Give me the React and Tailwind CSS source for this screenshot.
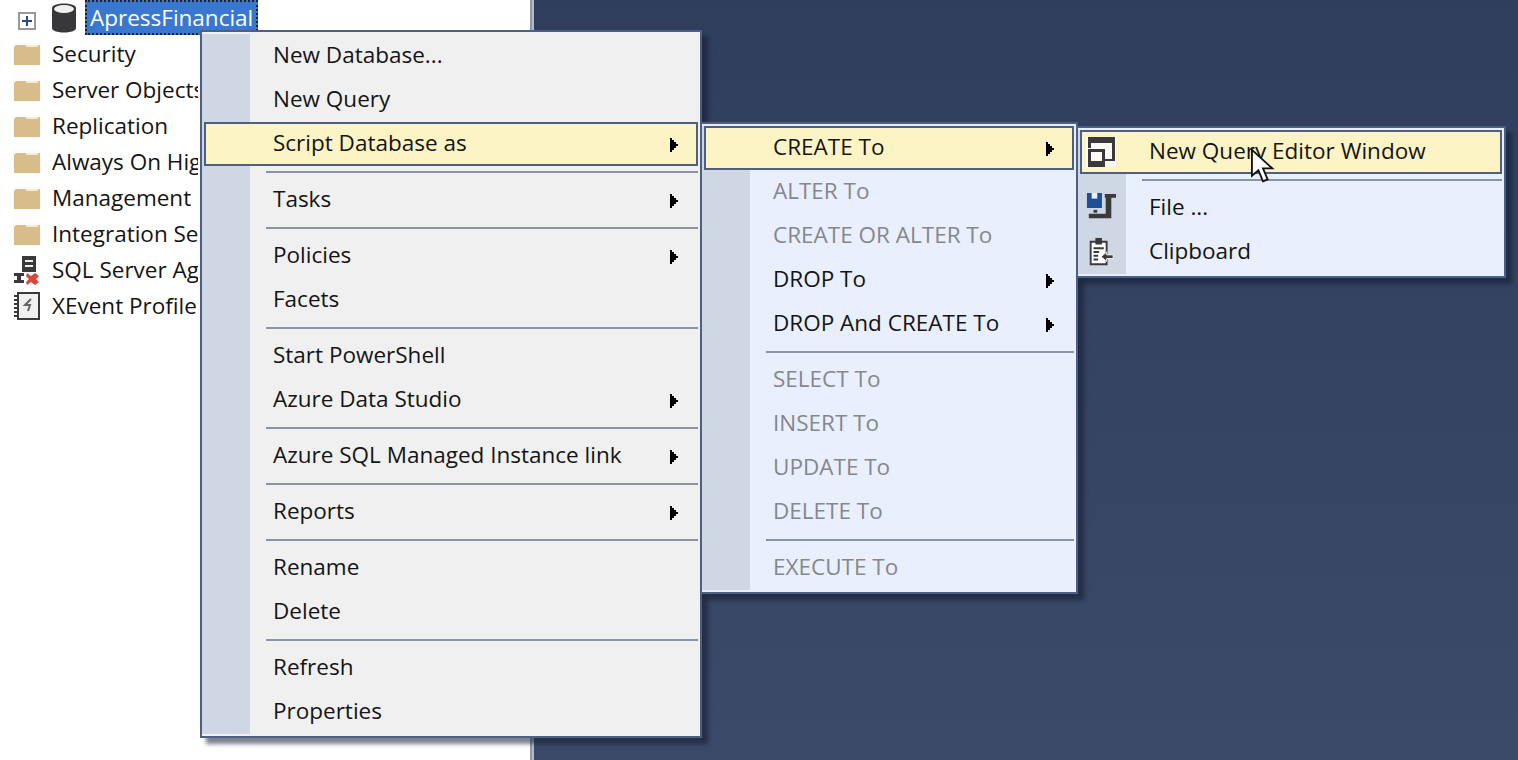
import React from 'react'

const font = { fontFamily: '"Open Sans", sans-serif' }

function Caret() {
  return (
    <svg width="8" height="14" viewBox="0 0 8 14" className="absolute right-[20px] top-[16px]">
      <path d="M0 0h2v2h2v2h2v2h2v2h-2v2h-2v2h-2v2h-2z" fill="#000" />
    </svg>
  )
}

function Row({ label, arrow, active, disabled, icon }) {
  return (
    <div className={`relative h-[44px] ${active ? 'bg-[#fcf4c4] outline-2 -outline-offset-2 outline-[#4e5f85]' : ''}`}>
      {icon && <div className="absolute left-[6px] top-[7px] w-[30px] h-[30px]">{icon}</div>}
      <span className={`absolute left-[69px] top-[6px] text-[22.5px] leading-[30px] whitespace-nowrap ${disabled ? 'text-[#85878c]' : 'text-[#141414]'}`}>{label}</span>
      {arrow && <Caret />}
    </div>
  )
}

function Sep() {
  return (
    <div className="h-[12px] flex items-center pl-[62px]">
      <div className="h-[2px] w-full bg-[#8a94a6]" />
    </div>
  )
}

function Menu({ className, bg, items }) {
  return (
    <div className={`absolute border-2 border-[#4e5f85] shadow-[6px_6px_4px_rgba(20,28,50,0.55)] ${bg} ${className}`}>
      <div className="absolute left-0 top-[2px] bottom-[2px] w-[48px] bg-[#cfd6e4]" />
      <div className="relative p-[2px]">
        {items.map((it, i) =>
          it === '-' ? <Sep key={i} /> : <Row key={i} {...it} />
        )}
      </div>
    </div>
  )
}

function Expander() {
  return (
    <svg width="18" height="18" viewBox="0 0 18 18">
      <rect x="1" y="1" width="16" height="16" fill="#fff" stroke="#9a9a9a" strokeWidth="2" />
      <path d="M9 4v10M4 9h10" stroke="#2f4a86" strokeWidth="2" />
    </svg>
  )
}

function Folder() {
  return (
    <svg width="28" height="24" viewBox="0 0 28 24" className="shrink-0">
      <rect width="28" height="24" fill="#fbfbf9" />
      <path d="M1 5l2-2h24v20H1z" fill="#d8bc8a" />
      <rect x="13" y="3" width="12" height="2" fill="#f4ead7" />
    </svg>
  )
}

function Database() {
  return (
    <svg width="26" height="30" viewBox="0 0 26 30">
      <path d="M1 5c0-6 24-6 24 0v20c0 6-24 6-24 0z" fill="#38383a" />
      <ellipse cx="13" cy="6" rx="10" ry="4" fill="#efefef" />
    </svg>
  )
}

function AgentIcon() {
  return (
    <svg width="28" height="30" viewBox="0 0 28 30">
      <rect x="9" y="1" width="14" height="16" fill="#3a3a3c" />
      <rect x="12" y="5" width="8" height="2" fill="#eee" />
      <rect x="12" y="10" width="8" height="2" fill="#eee" />
      <path d="M1 18h10v3h-3v4h3v3h-10v-3h3v-4h-3z" fill="#3a3a3c" />
      <path d="M14 18l4 3 4-3 4 3-3 3 3 3-4 3-4-3-4 3-1-3 3-3-3-3z" fill="#d8473c" />
    </svg>
  )
}

function XEventIcon() {
  return (
    <svg width="26" height="28" viewBox="0 0 26 28">
      <rect x="4" y="1" width="21" height="26" fill="#f0f0f0" stroke="#3a3a3c" strokeWidth="2" />
      <path d="M0 4h3M0 8h3M0 12h3M0 16h3M0 20h3M0 24h3" stroke="#3a3a3c" strokeWidth="2" />
      <path d="M17 7l-6 6h5l-2 6" fill="none" stroke="#666" strokeWidth="2" />
    </svg>
  )
}

function QueryWindowIcon() {
  return (
    <svg width="30" height="30" viewBox="0 0 30 30">
      <rect width="30" height="30" fill="#fbfbf4" />
      <path d="M2 0h27v24H19v-2h7V6H5v5H2z" fill="#3a3a3c" />
      <path d="M2 12h17v18H2zM5 15v9h11v-9z" fill="#3a3a3c" fillRule="evenodd" />
    </svg>
  )
}

function ToFileIcon() {
  return (
    <svg width="30" height="30" viewBox="0 0 32 32">
      <path d="M1 0h16v16H1z" fill="#1f4f96" />
      <rect x="6" y="0" width="6" height="6" fill="#e8effc" />
      <path d="M20 1h12v4h-5v22H3v-5h18V5h-1z" fill="#3a3a3c" />
      <rect x="8" y="18" width="4" height="3" fill="#3a3a3c" />
    </svg>
  )
}

function ClipboardIcon() {
  return (
    <svg width="30" height="30" viewBox="0 0 32 32">
      <path d="M5 5h17v24H5z" fill="#fff" stroke="#3a3a3c" strokeWidth="2" />
      <rect x="10" y="1" width="7" height="7" fill="#3a3a3c" />
      <path d="M8 12h11M8 16h6M8 20h5M8 24h5" stroke="#3a3a3c" strokeWidth="2" />
      <path d="M16 21l6-5v3h7v4h-7v3z" fill="#3a3a3c" stroke="#fff" />
    </svg>
  )
}

const tree = [
  { label: 'Security', icon: <Folder /> },
  { label: 'Server Objects', icon: <Folder /> },
  { label: 'Replication', icon: <Folder /> },
  { label: 'Always On High Availability', icon: <Folder /> },
  { label: 'Management', icon: <Folder /> },
  { label: 'Integration Services Catalogs', icon: <Folder /> },
  { label: 'SQL Server Agent', icon: <AgentIcon /> },
  { label: 'XEvent Profiler', icon: <XEventIcon /> },
]

const mainItems = [
  { label: 'New Database...' },
  { label: 'New Query' },
  { label: 'Script Database as', arrow: true, active: true },
  '-',
  { label: 'Tasks', arrow: true },
  '-',
  { label: 'Policies', arrow: true },
  { label: 'Facets' },
  '-',
  { label: 'Start PowerShell' },
  { label: 'Azure Data Studio', arrow: true },
  '-',
  { label: 'Azure SQL Managed Instance link', arrow: true },
  '-',
  { label: 'Reports', arrow: true },
  '-',
  { label: 'Rename' },
  { label: 'Delete' },
  '-',
  { label: 'Refresh' },
  { label: 'Properties' },
]

const scriptItems = [
  { label: 'CREATE To', arrow: true, active: true },
  { label: 'ALTER To', disabled: true },
  { label: 'CREATE OR ALTER To', disabled: true },
  { label: 'DROP To', arrow: true },
  { label: 'DROP And CREATE To', arrow: true },
  '-',
  { label: 'SELECT To', disabled: true },
  { label: 'INSERT To', disabled: true },
  { label: 'UPDATE To', disabled: true },
  { label: 'DELETE To', disabled: true },
  '-',
  { label: 'EXECUTE To', disabled: true },
]

const createItems = [
  { label: 'New Query Editor Window', active: true, icon: <QueryWindowIcon /> },
  '-',
  { label: 'File ...', icon: <ToFileIcon /> },
  { label: 'Clipboard', icon: <ClipboardIcon /> },
]

export default function App() {
  return (
    <div className="relative w-[1518px] h-[760px] overflow-hidden flex" style={font}>
      <div className="w-[530px] bg-white">
        <div className="h-[36px] flex items-center">
          <div className="ml-[18px] w-[18px] h-[18px] mt-[6px] flex"><Expander /></div>
          <div className="ml-[15px] w-[26px] flex"><Database /></div>
          <div className="ml-[8px] h-[35px] px-[5px] mb-[1px] bg-[#3a78d0] outline-2 outline-dotted -outline-offset-2 outline-[#222] flex items-center text-white text-[22.5px]">ApressFinancial</div>
        </div>
        {tree.map(t => (
          <div key={t.label} className="h-[36px] flex items-center pl-[13px] gap-[11px]">
            <div className="w-[28px] flex justify-center">{t.icon}</div>
            <span className="max-w-[146px] overflow-hidden text-[22.5px] text-[#141414] whitespace-nowrap">{t.label}</span>
          </div>
        ))}
      </div>
      <div className="w-[2px] bg-[#8e98ac]" />
      <div className="w-[2px] bg-[#b0bbd0]" />
      <div className="flex-1 bg-gradient-to-b from-[#2f3e5c] to-[#3b4a68]" />

      <Menu className="left-[200px] top-[30px] w-[502px]" bg="bg-[#f0f0f0]" items={mainItems} />
      <Menu className="left-[700px] top-[122px] w-[378px]" bg="bg-[#e9effc]" items={scriptItems} />
      <Menu className="left-[1076px] top-[126px] w-[430px]" bg="bg-[#e9effc]" items={createItems} />

      {/* mouse pointer */}
      <svg width="24" height="37" viewBox="0 0 26 38" className="absolute left-[1251px] top-[148px]">
        <path d="M1 1v28l7-6 5 12 5-2-5-12h10z" fill="#fff" stroke="#111" strokeWidth="2" />
      </svg>
    </div>
  )
}
